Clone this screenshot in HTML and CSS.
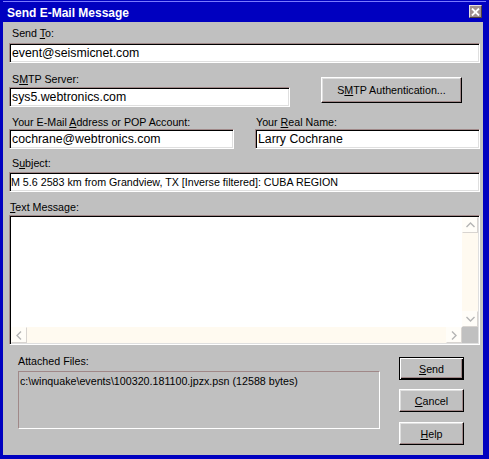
FILE: index.html
```html
<!DOCTYPE html>
<html>
<head>
<meta charset="utf-8">
<title>Send E-Mail Message</title>
<link rel="stylesheet" href="styles.css">
</head>
<body>
<div class="window">
  <div class="titlebar">
    <span class="title">Send E-Mail Message</span>
    <span class="close">
      <svg width="9" height="8" viewBox="0 0 9 8"><path d="M1 0.5 L8 7.5 M8 0.5 L1 7.5" stroke="#fff" stroke-width="1.8" fill="none"/></svg>
    </span>
  </div>
  <div class="client">
    <div class="field f-to">
      <div class="label">Send <u>T</u>o:</div>
      <div class="edit big">event@seismicnet.com</div>
    </div>
    <div class="row r-smtp">
      <div class="field f-smtp">
        <div class="label">S<u>M</u>TP Server:</div>
        <div class="edit big">sys5.webtronics.com</div>
      </div>
      <div class="btn btn-auth">S<u>M</u>TP Authentication...</div>
    </div>
    <div class="row r-acct">
      <div class="field f-email">
        <div class="label">Your E-Mail <u>A</u>ddress or POP Account:</div>
        <div class="edit big">cochrane@webtronics.com</div>
      </div>
      <div class="field f-name">
        <div class="label lab-name">Your <u>R</u>eal Name:</div>
        <div class="edit big">Larry Cochrane</div>
      </div>
    </div>
    <div class="field f-subject">
      <div class="label">S<u>u</u>bject:</div>
      <div class="edit small">M 5.6 2583 km from Grandview, TX [Inverse filtered]: CUBA REGION</div>
    </div>
    <div class="field f-text">
      <div class="label lab-text"><u>T</u>ext Message:</div>
      <div class="memo">
        <div class="memo-top">
          <div class="memo-area"></div>
          <div class="vscroll">
            <div class="sbtn"><svg width="9" height="6" viewBox="0 0 9 6"><path d="M0.5 5 L4.5 1 L8.5 5" stroke="#b4b4b4" stroke-width="1.4" fill="none"/></svg></div>
            <div class="vtrack"></div>
            <div class="sbtn"><svg width="9" height="6" viewBox="0 0 9 6"><path d="M0.5 1 L4.5 5 L8.5 1" stroke="#b4b4b4" stroke-width="1.4" fill="none"/></svg></div>
          </div>
        </div>
        <div class="hscroll">
          <div class="sbtn"><svg width="6" height="9" viewBox="0 0 6 9"><path d="M5 0.5 L1 4.5 L5 8.5" stroke="#b4b4b4" stroke-width="1.4" fill="none"/></svg></div>
          <div class="htrack"></div>
          <div class="sbtn"><svg width="6" height="9" viewBox="0 0 6 9"><path d="M1 0.5 L5 4.5 L1 8.5" stroke="#b4b4b4" stroke-width="1.4" fill="none"/></svg></div>
          <div class="corner"></div>
        </div>
      </div>
    </div>
    <div class="row r-bottom">
      <div class="field f-attach">
        <div class="label lab-attach">Attached Files:</div>
        <div class="attach">c:\winquake\events\100320.181100.jpzx.psn (12588 bytes)</div>
      </div>
      <div class="buttons">
        <div class="btn btn-cmd default"><u>S</u>end</div>
        <div class="btn btn-cmd b-cancel"><u>C</u>ancel</div>
        <div class="btn btn-cmd b-help"><u>H</u>elp</div>
      </div>
    </div>
  </div>
</div>
</body>
</html>
```

FILE: styles.css
```css
* { box-sizing: border-box; }
html, body { margin: 0; padding: 0; }
body {
  width: 489px;
  height: 459px;
  overflow: hidden;
  background: #0000c0;
  font-family: "Liberation Sans", Arial, sans-serif;
  font-size: 10.7px;
  color: #000;
}
.window {
  width: 489px;
  height: 459px;
  background: #0000c0;
  padding: 0 6px 0 3px;
}
.titlebar {
  height: 22px;
  display: flex;
  align-items: flex-start;
  background: linear-gradient(#0000c0 0 1px, #7a7aff 1px 2px, #0000c0 2px);
  margin: 0 -3px 0 0;
}
.title {
  color: #fff;
  font-weight: bold;
  font-size: 12px;
  line-height: 14px;
  margin-top: 6px;
  margin-left: 4px;
}
.close {
  margin-left: auto;
  margin-top: 5px;
  margin-right: 4px;
  width: 13px;
  height: 13px;
  background: #a09090;
  border: 1px solid;
  border-color: #e8e0e0 #504040 #504040 #e8e0e0;
  display: flex;
  align-items: center;
  justify-content: center;
}
.close svg { display: block; }
.client {
  width: 480px;
  height: 433px;
  background: #c0c0c0;
  padding: 5px 0 0 6px;
}
.label {
  height: 12px;
  line-height: 12px;
  white-space: nowrap;
  margin-left: 3px;
}
.label u { text-decoration-thickness: 1px; text-underline-offset: 1px; }
.edit {
  height: 20px;
  background: #fff;
  border: 1px solid;
  border-color: #a08888 #fff #fff #a08888;
  box-shadow: inset 1px 1px 0 #000, inset -1px -1px 0 #dfdfdf;
  padding: 1px 2px;
  line-height: 16px;
  white-space: nowrap;
  overflow: hidden;
}
.edit.big { font-size: 12.3px; }
.edit.small { font-size: 10.7px; padding-left: 1px; }
.row { display: flex; align-items: flex-start; }

.f-to .edit { margin-top: 4px; width: 471px; }
.r-smtp { margin-top: 10px; }
.f-smtp .edit { margin-top: 2px; width: 281px; }
.btn {
  background: #c0c0c0;
  border: 1px solid;
  border-color: #fff #000 #000 #fff;
  box-shadow: inset -1px -1px 0 #a08888, inset 1px 1px 0 #dfdfdf;
  display: flex;
  align-items: center;
  justify-content: center;
  white-space: nowrap;
}
.btn-auth {
  margin-top: 4px;
  margin-left: 31px;
  width: 141px;
  height: 26px;
}
.r-acct { margin-top: 9px; }
.f-email .edit { margin-top: 1px; width: 225px; }
.f-name { margin-left: 21px; }
.f-name .edit { margin-top: 1px; width: 225px; }
.lab-name { margin-left: 1px; }
.f-subject { margin-top: 8px; }
.f-subject .edit { margin-top: 3px; width: 471px; }
.f-text { margin-top: 9px; }
.lab-text { margin-left: 1px; }
.memo {
  margin-top: 2px;
  width: 471px;
  height: 130px;
  border: 1px solid;
  border-color: #a08888 #fff #fff #a08888;
  box-shadow: inset 1px 1px 0 #000, inset -1px -1px 0 #dfdfdf;
  padding: 1px;
  background: #fff;
  display: flex;
  flex-direction: column;
}
.memo-top { flex: 1; display: flex; }
.memo-area { flex: 1; background: #fff; }
.vscroll { width: 16px; display: flex; flex-direction: column; background: #fffaf0; }
.vtrack { flex: 1; background: #fffaf0; }
.hscroll { height: 16px; display: flex; background: #fffaf0; }
.htrack { flex: 1; background: #fffaf0; }
.sbtn {
  width: 16px;
  height: 16px;
  background: #fffdf8;
  border: 1px solid;
  border-color: #fffdf8 #d8d4d0 #d8d4d0 #fffdf8;
  display: flex;
  align-items: center;
  justify-content: center;
}
.sbtn svg { display: block; }
.corner { width: 16px; height: 16px; background: #c0c0c0; }

.r-bottom { margin-top: 10px; }
.f-attach { margin-left: 9px; }
.lab-attach { margin-left: 0; }
.attach {
  margin-top: 4px;
  width: 362px;
  height: 58px;
  border: 1px solid;
  border-color: #a08888 #fff #fff #a08888;
  padding: 3px 0 0 1px;
  line-height: 12px;
  white-space: nowrap;
}
.buttons {
  margin-left: 19px;
  margin-top: 2px;
  display: flex;
  flex-direction: column;
}
.btn-cmd { width: 65px; height: 23px; }
.btn.default {
  border: 1px solid #000;
  box-shadow: inset 1px 1px 0 #fff, inset -1px -1px 0 #000, inset -2px -2px 0 #a08888;
}
.b-cancel { margin-top: 9px; }
.b-help { margin-top: 10px; }
```
